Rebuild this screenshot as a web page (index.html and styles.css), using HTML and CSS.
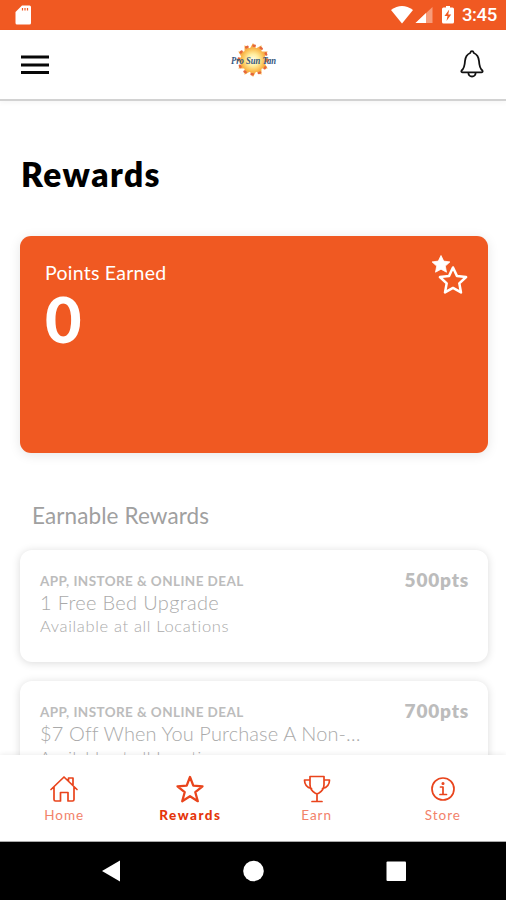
FILE: index.html
```html
<!DOCTYPE html>
<html lang="en">
<head>
<meta charset="utf-8">
<title>Rewards</title>
<link rel="stylesheet" href="styles.css">
</head>
<body>
<div class="phone">
  <div class="status">
    <svg class="sd" width="17" height="20" viewBox="0 0 17 20"><path d="M7 .5h7.500q1.500 0 1.500 1.500v16q0 1.500-1.500 1.500h-12.500q-1.500 0-1.500-1.500V7z" fill="#fff"/><path d="M7.500 3v2.500M10 3v2.500M12.500 3v2.500" stroke="#f05922" stroke-width="1.200"/></svg>
    <div class="status-right">
      <svg width="120" height="29" viewBox="386 0 120 29">
        <path d="M391 10Q402 2 413 10L402 23.500z" fill="#fff"/>
        <path d="M432.500 7v16h-17z" fill="#f79c7a"/><path d="M426 13v10h-10.500z" fill="#fff"/>
        <path d="M446 6h4v1.500h2.500q1.500 0 1.500 1.500v13q0 1.500-1.500 1.500h-9q-1.500 0-1.500-1.500V9q0-1.500 1.500-1.500h2.500z" fill="#fff"/>
        <path d="M449.200 9.500l-4.700 6.500h3l-1 5 4.700-6.500h-3z" fill="#f05922"/>
      </svg>
      <span class="clock">3:45</span>
    </div>
  </div>
  <header class="top">
    <svg class="menu" width="28" height="20" viewBox="0 0 28 20"><path d="M0 2h28M0 10h28M0 17.500h28" stroke="#080808" stroke-width="3"/></svg>
    <svg class="logo" width="54" height="36" viewBox="0 0 54 36">
      <defs><radialGradient id="sun"><stop offset="0" stop-color="#fffef0"/><stop offset=".5" stop-color="#ffed9c"/><stop offset="1" stop-color="#f9b545"/></radialGradient></defs>
      <g fill="#f8b04a"><path d="M26 1l4 7h-8zM26 35l4-7h-8zM9 18l7-4v8zM43 18l-7-4v8z"/><path d="M26 1l4 7h-8zM26 35l4-7h-8zM9 18l7-4v8zM43 18l-7-4v8z" transform="rotate(30 26 18)"/><path d="M26 1l4 7h-8zM26 35l4-7h-8zM9 18l7-4v8zM43 18l-7-4v8z" transform="rotate(60 26 18)"/></g>
      <circle cx="26" cy="18" r="12" fill="url(#sun)"/>
      <circle cx="26" cy="18" r="14.300" fill="none" stroke="#e5673c" stroke-width="2.400" stroke-linecap="round" stroke-dasharray="1.400 6.088"/>
      <text x="4" y="21.500" class="logo-text" textLength="45" lengthAdjust="spacingAndGlyphs">Pro Sun Tan</text>
    </svg>
    <svg class="bell" width="26" height="30" viewBox="0 0 26 30" fill="none" stroke="#111" stroke-width="1.800" stroke-linejoin="round"><path d="M13 2.200q-1.300 0-1.800 1.800Q6.500 6 6 12c-.3 5.500-.8 7.500-3.400 9.500-.7 1 0 1.900 1 1.900h18.800c1 0 1.700-.9 1-1.900-2.600-2-3.100-4-3.400-9.500Q19.500 6 14.800 4q-.5-1.800-1.800-1.800z"/><path d="M9.300 23.500q.3 4 3.700 4t3.700-4"/></svg>
  </header>
  <main class="content">
    <h1>Rewards</h1>
    <section class="points">
      <div><div class="points-label">Points Earned</div><div class="points-value">0</div></div>
      <svg class="stars" width="37" height="42" viewBox="0 0 37 42"><path d="M10 1.500l2.700 5.600 6.200.8-4.600 4.200 1.200 6.100-5.500-3-5.500 3 1.200-6.100L1.100 7.900l6.200-.8z" fill="#fff" stroke="#fff" stroke-width=".8" stroke-linejoin="round"/><path d="M22 13.500l3.900 8.400 9.200 1.100-6.800 6.300 1.700 9.100-8-4.500-8 4.500 1.700-9.100-6.800-6.300 9.200-1.100z" fill="#f05922" stroke="#fff" stroke-width="2.500" stroke-linejoin="round"/></svg>
    </section>
    <h2>Earnable Rewards</h2>
    <article class="deal">
      <div class="deal-info"><div class="kind">APP, INSTORE &amp; ONLINE DEAL</div><div class="name name-a">1 Free Bed Upgrade</div><div class="place">Available at all Locations</div></div>
      <div class="pts">500pts</div>
    </article>
    <article class="deal">
      <div class="deal-info"><div class="kind">APP, INSTORE &amp; ONLINE DEAL</div><div class="name name-b">$7 Off When You Purchase A Non-…</div><div class="place">Available at all Locations</div></div>
      <div class="pts">700pts</div>
    </article>
  </main>
  <nav class="tabs">
    <div class="tab"><svg width="30" height="30" viewBox="0 0 30 30"><path d="M2 15.500L15 3l13 12.500M5 13v12.500q0 1.500 1.500 1.500h5v-8.500h7.500v8.500h4.500q1.500 0 1.500-1.500V13M19.500 6.500V4H24v7"/></svg><span>Home</span></div>
    <div class="tab active"><svg width="30" height="30" viewBox="0 0 30 30"><path d="M15 3l3.300 8.700 9.200.6-7.200 5.900 2.500 9-7.800-5-7.800 5 2.500-9-7.200-5.900 9.200-.6z"/></svg><span>Rewards</span></div>
    <div class="tab"><svg width="30" height="30" viewBox="0 0 30 30"><path d="M8 2.500h14v8q0 5.500-5 8.500l-2 1-2-1q-5-3-5-8.500zM8 6H2.500q0 7 7 8.500M22 6h5.500q0 7-7 8.500M15 20v7.500M10 27.500h10"/></svg><span>Earn</span></div>
    <div class="tab"><svg width="30" height="30" viewBox="0 0 30 30"><circle cx="15" cy="15" r="11"/><path d="M12.500 13H15v7M12 20.500h6.500"/><circle cx="15" cy="9.500" r=".7"/></svg><span>Store</span></div>
  </nav>
  <div class="system">
    <svg width="506" height="58" viewBox="0 0 506 58" fill="#fff"><path d="M102 29l18-10.500v21z"/><circle cx="253.500" cy="29" r="10.300"/><rect x="386.500" y="19.500" width="19.500" height="19.500" rx="1"/></svg>
  </div>
</div>
</body>
</html>
```
FILE: styles.css
```css
* { box-sizing: border-box; }
body { margin: 0; font-family: Lato, "Liberation Sans", sans-serif; background: #fff; }
svg { display: block; flex: none; }
.phone { width: 506px; height: 900px; display: flex; flex-direction: column; overflow: hidden; white-space: nowrap; }
.status { height: 30px; flex: none; display: flex; justify-content: space-between; background: #f05922; }
.sd { margin: 5px 0 0 15px; }
.status-right { display: grid; width: 120px; }
.status-right > * { grid-area: 1 / 1; }
.clock { padding-left: 76px; font: 500 18.5px/31px Roboto, sans-serif; color: #fff; letter-spacing: -.4px; }
.top { height: 71px; flex: none; display: flex; align-items: flex-start; border-bottom: 2px solid #d2d2d2; box-shadow: 0 2px 5px #0000000a; }
.menu { margin: 25px 0 0 21px; }
.logo { margin: 12px 0 0 178px; }
.logo-text { font: italic 700 10px "Liberation Serif", serif; fill: #32557e; }
.bell { margin: 19px 0 0 178px; }
.content { flex: 1; min-height: 0; overflow: hidden; padding: 53px 18px 0 20px; }
h1 { margin: 0 0 42px 1px; font-size: 33.5px; line-height: 40px; font-weight: 800; letter-spacing: 1.45px; color: #000; }
.points { height: 217px; border-radius: 11px; background: #f05922; color: #fff; padding: 23px 20px 0 25px; display: flex; justify-content: space-between; align-items: flex-start; box-shadow: 0 2px 12px #0000001a; }
.points-label { font-size: 19.5px; line-height: 28px; letter-spacing: .25px; }
.points-value { font-size: 63px; line-height: 64px; font-weight: 900; }
.stars { margin-top: -5px; }
h2 { margin: 48px 0 19px 12px; font-size: 22.5px; line-height: 30px; font-weight: 400; letter-spacing: .1px; color: #a0a0a0; }
.deal { height: 112px; margin-bottom: 19px; padding: 21px 19px 0 20px; border-radius: 12px; background: #fff; display: flex; justify-content: space-between; box-shadow: 0 1px 9px #00000026; }
.kind { font-size: 13.5px; line-height: 20px; font-weight: 700; color: #bcbcbc; letter-spacing: .42px; }
.name { font-size: 20px; line-height: 22px; color: #aaa; font-weight: 300; }
.name-a { letter-spacing: .33px; }
.name-b { letter-spacing: .12px; }
.place { font-size: 16.5px; line-height: 26px; color: #aaa; font-weight: 300; letter-spacing: .65px; }
.pts { font-size: 19px; line-height: 20px; margin-top: -1px; font-weight: 800; color: #bcbcbc; letter-spacing: .8px; }
.tabs { position: relative; height: 87px; flex: none; display: grid; grid-template-columns: repeat(4, 1fr); padding-left: 1px; background: #fff; border-bottom: 1px solid #aaa; box-shadow: 0 -1px 5px #00000012; }
.tab { display: flex; flex-direction: column; align-items: center; padding-top: 19px; font-size: 13.5px; line-height: 22px; color: #f2826a; letter-spacing: 1px; }
.tab svg { fill: none; stroke: #e9441c; stroke-width: 1.7; stroke-linejoin: round; stroke-linecap: round; }
.tab.active { color: #e5340b; font-weight: 900; letter-spacing: 1.5px; }
.tab.active svg { stroke-width: 2.3; }
.system { height: 58px; flex: none; background: #000; }
```
